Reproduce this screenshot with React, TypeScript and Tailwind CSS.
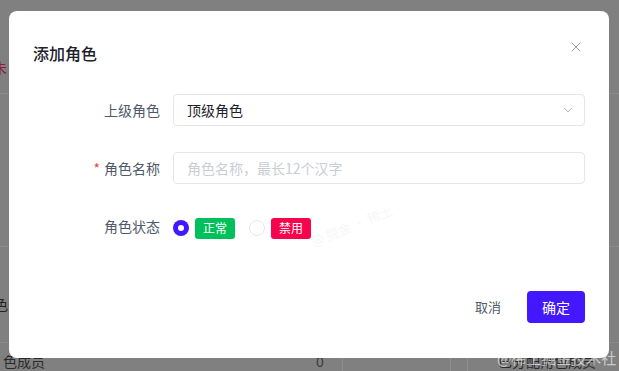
import { X, ChevronDown } from "lucide-react";

const font = { fontFamily: '"Noto Sans CJK SC", "Noto Sans", sans-serif' };

function Radio({ checked }: { checked?: boolean }) {
  return checked ? (
    <span className="block w-4 h-4 rounded-full bg-[#4318ff] flex items-center justify-center">
      <span className="block w-[6px] h-[6px] rounded-full bg-white" />
    </span>
  ) : (
    <span className="block w-4 h-4 rounded-full border border-[#e5e6eb] bg-white" />
  );
}

function Tag({ text, color }: { text: string; color: string }) {
  return (
    <span className={`h-[21px] w-10 rounded-[3px] text-white text-xs flex items-center justify-center ${color}`}>
      {text}
    </span>
  );
}

export default function App() {
  return (
    <div className="relative w-[619px] h-[371px] overflow-hidden bg-[#808080]" style={font}>
      {/* page behind the mask */}
      <div className="flex flex-col h-full">
        <div className="h-[59px]" />
        <div className="h-[16px] -ml-[7px] text-[14px] leading-4 text-[#8c1f3f]">未</div>
        <div className="h-[18px]" />
        <div className="h-px bg-[#8b8b8b]" />
        <div className="h-[152px]" />
        <div className="h-px bg-[#8b8b8b]" />
        <div className="h-[49px]" />
        <div className="h-[16px] -ml-[6px] text-[14px] leading-4 text-[#222]">色分</div>
        <div className="h-[30px]" />
        <div className="h-px bg-[#8a8a8a]" />
        <div className="flex-1 flex items-end text-[14px] leading-5 text-[#2a2a2a]">
          <span className="pl-[3px] w-[316px]">色成员</span>
          <span className="w-[26px] text-[#3a3a3a]">0</span>
          <span className="w-px h-full bg-[#8e8e8e]" />
          <span className="w-[107px]" />
          <span className="w-px h-full bg-[#8e8e8e]" />
          <span className="w-4" />
          <span className="w-px h-full bg-[#8e8e8e]" />
          <span className="pl-[30px]">已分配角色成员</span>
        </div>
      </div>

      {/* modal */}
      <div className="absolute left-[9px] top-[11px] w-[600px] rounded-lg bg-white px-6 pt-[30px] pb-[35px]">
        <button className="absolute right-[25px] top-[28px] text-[#86909c]">
          <X size={16} strokeWidth={1.3} />
        </button>
        <h2 className="text-base leading-6 font-medium text-[#1d2129]">添加角色</h2>

        <div className="mt-[29px] flex items-center h-8">
          <label className="w-[127px] text-right text-sm text-[#4e5969]">上级角色</label>
          <div className="ml-[13px] flex-1 h-8 rounded border border-[#e5e6eb] flex items-center justify-between pl-[13px] pr-[9px] text-sm text-[#1d2129]">
            <span>顶级角色</span>
            <ChevronDown size={14} strokeWidth={1.3} className="text-[#86909c]" />
          </div>
        </div>

        <div className="mt-[26px] flex items-center h-8">
          <label className="w-[127px] text-right text-sm text-[#4e5969]">
            <span className="text-[#f53f3f] mr-1">*</span>角色名称
          </label>
          <div className="ml-[13px] flex-1 h-8 rounded border border-[#e5e6eb] flex items-center pl-[13px] text-sm text-[#c9cdd4]">
            角色名称，最长12个汉字
          </div>
        </div>

        <div className="mt-[28px] flex items-center h-8">
          <label className="w-[127px] text-right text-sm text-[#4e5969] -mt-1">角色状态</label>
          <div className="ml-[13px] flex items-center">
            <Radio checked />
            <span className="ml-[6px]">
              <Tag text="正常" color="bg-[#00c05c]" />
            </span>
            <span className="ml-[14px]">
              <Radio />
            </span>
            <span className="ml-[6px]">
              <Tag text="禁用" color="bg-[#f7054c]" />
            </span>
          </div>
        </div>

        <div className="mt-[47px] flex justify-end items-center gap-[11px]">
          <button className="h-8 px-[15px] text-[13px] text-[#4e5969]">取消</button>
          <button className="h-8 w-[58px] rounded bg-[#4318ff] text-sm text-white">确定</button>
        </div>

        <span className="absolute left-[300px] top-[205px] -rotate-[22deg] text-[13px] text-[#f7f7f7] select-none">
          @ 掘金 · 稀土
        </span>
      </div>

      <span className="absolute left-[497px] top-[348px] text-[15px] leading-5 text-white/60 select-none">
        @稀土掘金技术社区
      </span>
    </div>
  );
}
